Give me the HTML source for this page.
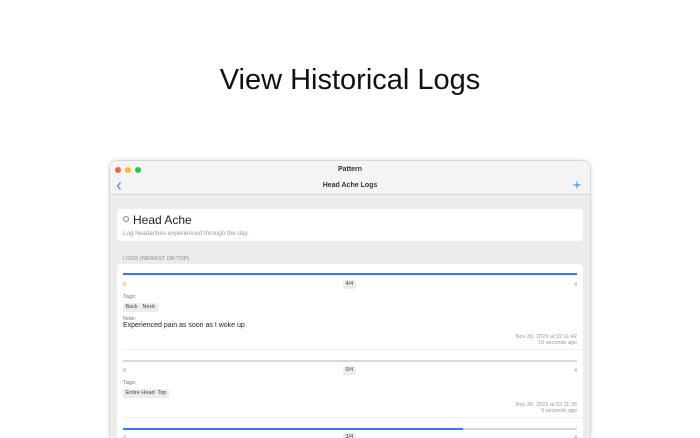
<!DOCTYPE html>
<html><head><meta charset="utf-8"><style>
*{margin:0;padding:0;box-sizing:border-box}
html,body{width:700px;height:438px;overflow:hidden}
body{background:#fff;position:relative;font-family:"Liberation Sans",sans-serif;color:#222}
.a{position:absolute;white-space:nowrap}
h1{position:absolute;left:0;width:700px;top:64px;text-align:center;font-weight:normal;font-size:29px;color:#111}
.win{position:absolute;left:110px;top:161px;width:480px;height:277px;background:#ececec;border-radius:7px 7px 0 0;box-shadow:0 0 6px rgba(0,0,0,.18),0 0 0 1px rgba(0,0,0,.08);overflow:hidden}
.tb{position:absolute;left:0;top:0;width:480px;height:34px;background:#f4f4f4;border-bottom:1px solid #d6d6d6}
.dot{position:absolute;top:6px;width:6px;height:6px;border-radius:50%}
.card{position:absolute;background:#fff;border-radius:4px}
.small{font-size:5.5px;color:#999}
.pill{position:absolute;background:#ececec;border-radius:2px;font-size:5.5px;color:#444;height:9px;line-height:9px;padding:0 2.5px}
.bar{position:absolute;left:13px;width:454px;height:2px;background:#d8d8d8}
</style></head><body>
<h1>View Historical Logs</h1>
<div class="win">
  <div class="tb">
    <div class="dot" style="left:5px;background:#fe5f57"></div>
    <div class="dot" style="left:15px;background:#febc2e"></div>
    <div class="dot" style="left:25px;background:#28c840"></div>
    <div class="a" style="left:0;width:480px;text-align:center;top:5px;font-size:7px;font-weight:bold;color:#333">Pattern</div>
    <svg class="a" style="left:6px;top:21px" width="6" height="8" viewBox="0 0 6 8"><path d="M4.5 0.5 L1.5 4 L4.5 7.5" fill="none" stroke="#2a7cf6" stroke-width="1.1"/></svg>
    <div class="a" style="left:0;width:480px;text-align:center;top:21px;font-size:7px;font-weight:bold;color:#333">Head Ache Logs</div>
    <svg class="a" style="left:463px;top:20px" width="8" height="8" viewBox="0 0 8 8"><path d="M4 0.5V7.5M0.5 4H7.5" stroke="#2a7cf6" stroke-width="0.9"/></svg>
  </div>
  <div class="card" style="left:7px;top:48px;width:466px;height:32px">
    <div class="a" style="left:6px;top:7px;width:6px;height:6px;border:0.8px solid #888;border-radius:50%"></div>
    <div class="a" style="left:16px;top:4px;font-size:12px;color:#222">Head Ache</div>
    <div class="a" style="left:6px;top:21px;font-size:6.3px;color:#999">Log headaches experienced through the day.</div>
  </div>
  <div class="a" style="left:13px;top:95px;font-size:5.5px;color:#888">LOGS (NEWEST ON TOP)</div>
  <div class="card" style="left:7px;top:103px;width:466px;height:200px;border-radius:4px 4px 0 0"></div>

  <div class="bar" style="top:112px;background:#2a7cf6"></div>
  <div class="a small" style="left:13px;top:121px">0</div>
  <div class="pill" style="left:233px;top:119px">4/4</div>
  <div class="a small" style="left:464px;top:121px">4</div>
  <div class="a small" style="left:13px;top:133px;color:#777">Tags:</div>
  <div class="pill" style="left:13px;top:142px">Back</div>
  <div class="pill" style="left:30px;top:142px">Neck</div>
  <div class="a small" style="left:13px;top:155px;color:#777">Note:</div>
  <div class="a" style="left:13px;top:161px;font-size:7px;color:#222">Experienced pain as soon as I woke up</div>
  <div class="a small" style="right:13px;top:173px;text-align:right;line-height:6px">Nov 30, 2023 at 02:11:42<br>16 seconds ago</div>
  <div class="a" style="left:13px;top:188px;width:460px;height:1px;background:#f0f0f0"></div>

  <div class="bar" style="top:199px"></div>
  <div class="a small" style="left:13px;top:207px">0</div>
  <div class="pill" style="left:233px;top:205px">0/4</div>
  <div class="a small" style="left:464px;top:207px">4</div>
  <div class="a small" style="left:13px;top:219px;color:#777">Tags:</div>
  <div class="pill" style="left:13px;top:228px">Entire Head</div>
  <div class="pill" style="left:45px;top:228px">Top</div>
  <div class="a small" style="right:13px;top:241px;text-align:right;line-height:6px">Nov 30, 2023 at 02:11:35<br>5 seconds ago</div>
  <div class="a" style="left:13px;top:256px;width:460px;height:1px;background:#f0f0f0"></div>

  <div class="bar" style="top:267px"></div>
  <div class="bar" style="top:267px;width:340px;background:#2a7cf6"></div>
  <div class="a small" style="left:13px;top:274px">0</div>
  <div class="pill" style="left:233px;top:272px">3/4</div>
  <div class="a small" style="left:464px;top:274px">4</div>
</div>
</body></html>
